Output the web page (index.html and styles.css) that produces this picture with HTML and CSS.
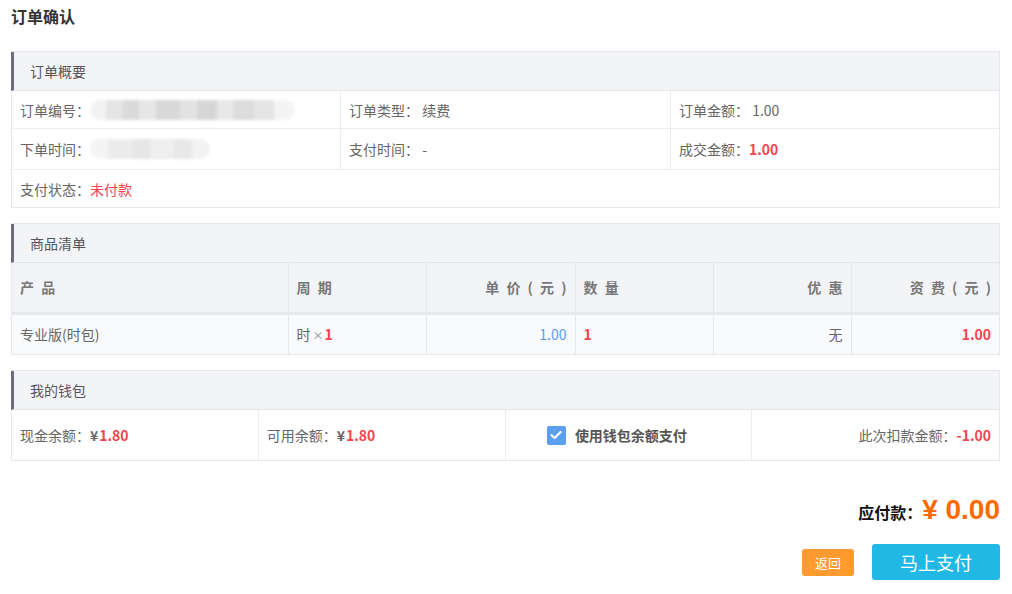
FILE: index.html
```html
<!DOCTYPE html>
<html lang="zh">
<head>
<meta charset="utf-8">
<title>订单确认</title>
<link rel="stylesheet" href="styles.css">
</head>
<body>
<div class="page">
  <h1 class="title">订单确认</h1>

  <section class="panel">
    <div class="panel-head">订单概要</div>
    <div class="info-grid">
      <div class="cell r1">订单编号：<span class="mask mask-long"></span></div>
      <div class="cell r1">订单类型： 续费</div>
      <div class="cell r1">订单金额： 1.00</div>
      <div class="cell r2">下单时间：<span class="mask mask-short"></span></div>
      <div class="cell r2">支付时间： -</div>
      <div class="cell r2">成交金额： <span class="red bold">1.00</span></div>
      <div class="cell full">支付状态： <span class="red">未付款</span></div>
    </div>
  </section>

  <section class="panel">
    <div class="panel-head">商品清单</div>
    <table class="goods">
      <colgroup>
        <col class="c1"><col class="c2"><col class="c3"><col class="c4"><col class="c5"><col class="c6">
      </colgroup>
      <thead>
        <tr>
          <th>产 品</th>
          <th>周 期</th>
          <th class="r">单 价 ( 元 )</th>
          <th>数 量</th>
          <th class="r">优 惠</th>
          <th class="r">资 费 ( 元 )</th>
        </tr>
      </thead>
      <tbody>
        <tr>
          <td>专业版(时包)</td>
          <td>时<span class="times">×</span><span class="red bold">1</span></td>
          <td class="r blue">1.00</td>
          <td><span class="red bold">1</span></td>
          <td class="r">无</td>
          <td class="r"><span class="red bold">1.00</span></td>
        </tr>
      </tbody>
    </table>
  </section>

  <section class="panel">
    <div class="panel-head">我的钱包</div>
    <div class="wallet">
      <div class="wcell">现金余额：<span class="yen">¥</span><span class="red bold">1.80</span></div>
      <div class="wcell">可用余额：<span class="yen">¥</span><span class="red bold">1.80</span></div>
      <div class="wcell center">
        <span class="check"><svg width="12" height="10" viewBox="0 0 12 10"><path d="M1.5 5.2 L4.6 8 L10.5 2" fill="none" stroke="#fff" stroke-width="2.2" stroke-linecap="round" stroke-linejoin="round"/></svg></span>
        <span class="use">使用钱包余额支付</span>
      </div>
      <div class="wcell right">此次扣款金额： <span class="red bold">-1.00</span></div>
    </div>
  </section>

  <div class="total">
    <span class="total-label">应付款：</span><span class="total-num">¥ 0.00</span>
  </div>
  <div class="actions">
    <button class="btn-back">返回</button>
    <button class="btn-pay">马上支付</button>
  </div>
</div>
</body>
</html>
```
FILE: styles.css
```css
* { box-sizing: border-box; }
body {
  margin: 0;
  background: #fff;
  font-family: "Noto Sans CJK SC", "Liberation Sans", sans-serif;
  font-size: 14px;
  color: #666;
}
.page {
  padding: 0 12px 0 11px;
}
.title {
  margin: 0;
  padding-top: 6px;
  font-size: 16px;
  line-height: 20px;
  font-weight: bold;
  color: #333;
  margin-bottom: 25px;
}
.panel {
  border: 1px solid #e6e8ec;
  margin-bottom: 15px;
}
.panel-head {
  height: 39px;
  line-height: 38px;
  background: #f3f4f7;
  border-left: 3px solid #6e6e7c;
  border-bottom: 1px solid #e3e5e9;
  margin-left: -1px;
  padding-left: 16px;
  color: #555;
}
.info-grid {
  display: grid;
  grid-template-columns: 329px 330px 1fr;
}
.cell {
  display: flex;
  align-items: center;
  padding-left: 8px;
  border-bottom: 1px solid #ececef;
  border-right: 1px solid #ececef;
}
.cell.r1 { height: 38px; }
.cell.r2 { height: 41px; }
.cell:nth-child(3n) { border-right: none; }
.cell.full {
  grid-column: 1 / -1;
  border-right: none;
  border-bottom: none;
  height: 37px;
}
.mask {
  display: inline-block;
  height: 20px;
  border-radius: 10px;
  filter: blur(1.5px);
  background:
    linear-gradient(90deg, #f2f2f2 0 8%, #e4e4e4 8% 16%, #dadada 16% 24%, #e6e6e6 24% 32%, #d8d8d8 32% 44%, #e2e2e2 44% 52%, #d6d6d6 52% 62%, #e8e8e8 62% 70%, #dcdcdc 70% 80%, #e4e4e4 80% 90%, #f4f4f4 90%);
}
.mask-long { width: 205px; }
.mask-short {
  width: 120px;
  background:
    linear-gradient(90deg, #f4f4f4 0 15%, #ececec 15% 35%, #e6e6e6 35% 50%, #eeeeee 50% 70%, #e8e8e8 70% 85%, #f2f2f2 85%);
}
.red { color: #f2454f; }
.bold { font-weight: bold; }
.times { color: #888; font-size: 11px; margin: 0 1px 0 2px; }

.goods {
  width: 100%;
  border-collapse: collapse;
  table-layout: fixed;
}
.c1 { width: 276px; }
.c2 { width: 138px; }
.c3 { width: 149px; }
.c4 { width: 138px; }
.c5 { width: 138px; }
.goods th {
  height: 50px;
  background: #f3f4f7;
  color: #777;
  font-weight: bold;
  text-align: left;
  padding: 0 8px;
  letter-spacing: 2px;
  border-right: 1px solid #e6e8ec;
  border-bottom: 3px solid #e8e9ec;
}
.goods td {
  height: 41px;
  background: #f9fafc;
  padding: 0 8px;
  border-right: 1px solid #e6e8ec;
  color: #666;
}
.goods th:last-child, .goods td:last-child { border-right: none; }
.goods .r { text-align: right; }
.goods th.r { padding-right: 6px; }
.goods .blue { color: #5b9bf0; }

.wallet {
  display: grid;
  grid-template-columns: repeat(4, 1fr);
}
.wcell {
  height: 50px;
  display: flex;
  align-items: center;
  padding: 0 8px;
  border-right: 1px solid #ececef;
}
.wcell:last-child { border-right: none; }
.wcell.center { justify-content: center; padding-right: 31px; }
.wcell.right { justify-content: flex-end; }
.yen { color: #666; font-weight: bold; margin-right: 1px; }
.check {
  width: 19px;
  height: 19px;
  border-radius: 2px;
  background: #5b9ff0;
  display: inline-flex;
  align-items: center;
  justify-content: center;
  margin-right: 9px;
}
.use { font-weight: bold; color: #555; }

.total {
  margin-top: 31px;
  display: flex;
  justify-content: flex-end;
  align-items: baseline;
  height: 36px;
  line-height: 36px;
}
.total-label {
  font-size: 16px;
  font-weight: bold;
  color: #111;
}
.total-num {
  font-family: "Liberation Sans", "Noto Sans CJK SC", sans-serif;
  font-size: 28px;
  font-weight: bold;
  color: #ff6a00;
}
.actions {
  margin-top: 16px;
  display: flex;
  justify-content: flex-end;
  align-items: center;
  gap: 18px;
}
.btn-back {
  width: 52px;
  height: 27px;
  border: none;
  border-radius: 3px;
  background: #ff9a2e;
  color: #fff;
  font-family: inherit;
  font-size: 13px;
  padding: 0;
}
.btn-pay {
  width: 128px;
  height: 36px;
  border: none;
  border-radius: 3px;
  background: #22b8e6;
  color: #fff;
  font-family: inherit;
  font-size: 18px;
  padding: 0;
}
```
